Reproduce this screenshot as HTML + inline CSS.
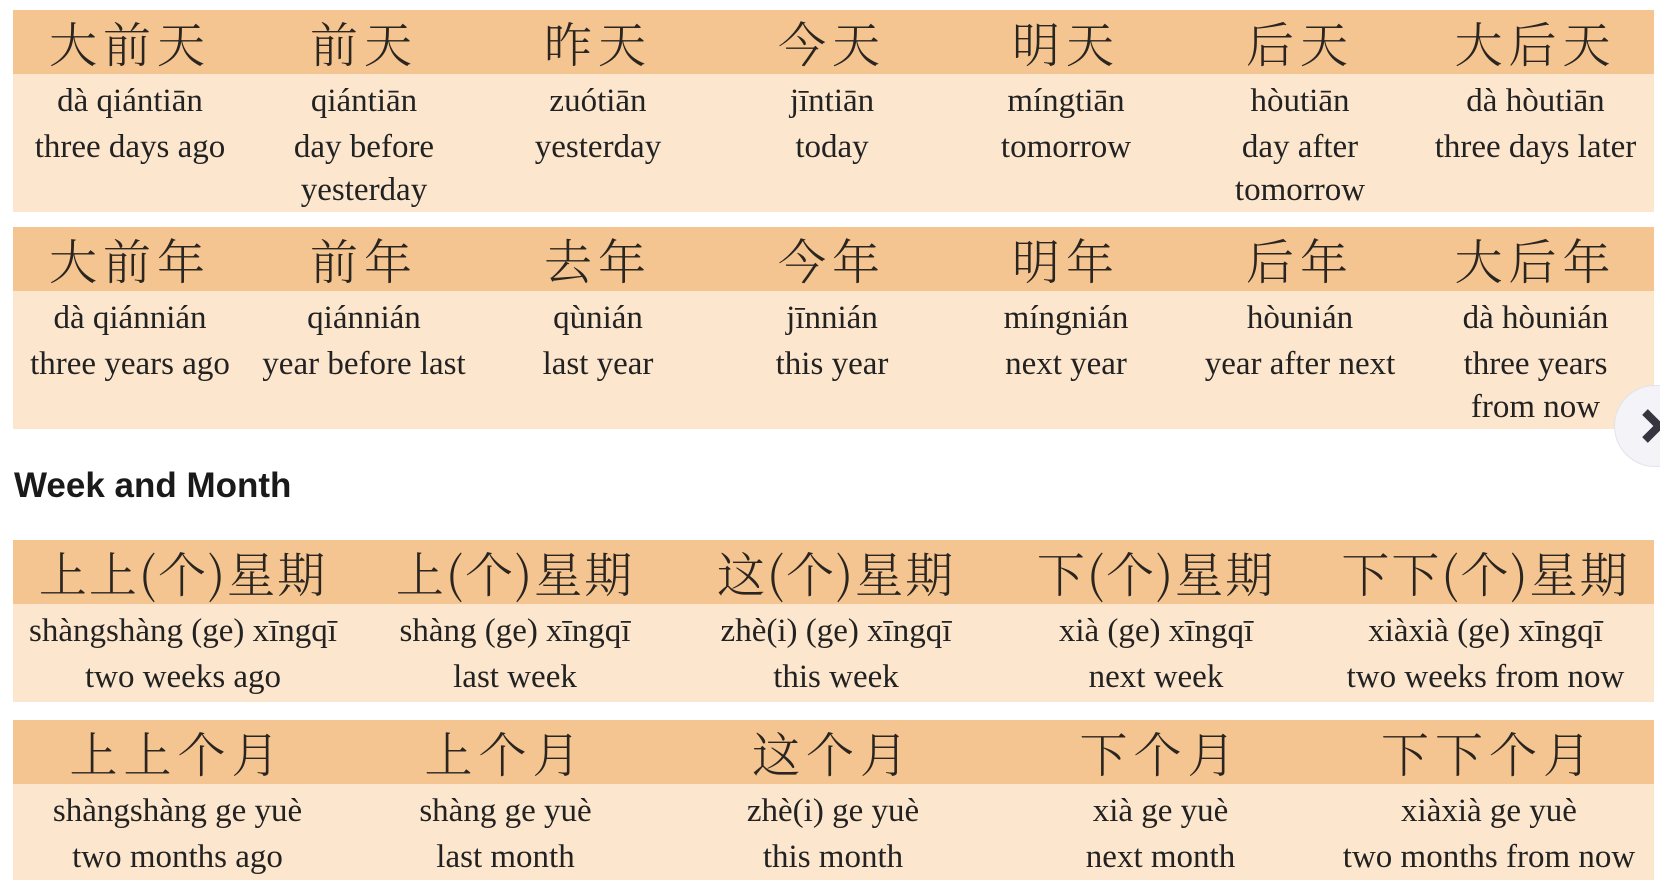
<!DOCTYPE html>
<html><head><meta charset="utf-8"><style>
body{margin:0;width:1660px;height:872px;background:#fff;position:relative;overflow:hidden;font-family:"Liberation Serif","Noto Serif CJK SC",serif;color:#222}
.t{position:absolute;left:13px;width:1641px;display:flex;background:#fce6cd}
.c{position:relative;text-align:center}
.h{background:#f4c590;font-family:"Noto Serif CJK SC",serif;font-weight:300;font-size:48px;letter-spacing:6px;line-height:64px;white-space:nowrap;color:#2a2520}
.s .h{letter-spacing:2px}
.b{font-size:33px;line-height:46px;padding-top:4px;white-space:nowrap}
.b span{display:block;line-height:40px}
h2{position:absolute;left:14px;top:466px;margin:0;font:bold 35px "Liberation Sans",sans-serif;color:#1a1a1a}
.nav{position:absolute;left:1614px;top:385px;width:80px;height:80px;border-radius:50%;background:#f4f3f8;border:1px solid #e2e2ea}
</style></head><body>
<div class="t" style="top:10px;height:202px">
<div class="c" style="width:234px"><div class="h">大前天</div><div class="b">dà qiántiān<br>three days ago</div></div>
<div class="c" style="width:234px"><div class="h">前天</div><div class="b">qiántiān<br>day before<span>yesterday</span></div></div>
<div class="c" style="width:234px"><div class="h">昨天</div><div class="b">zuótiān<br>yesterday</div></div>
<div class="c" style="width:234px"><div class="h">今天</div><div class="b">jīntiān<br>today</div></div>
<div class="c" style="width:234px"><div class="h">明天</div><div class="b">míngtiān<br>tomorrow</div></div>
<div class="c" style="width:234px"><div class="h">后天</div><div class="b">hòutiān<br>day after<span>tomorrow</span></div></div>
<div class="c" style="width:237px"><div class="h">大后天</div><div class="b">dà hòutiān<br>three days later</div></div>
</div>
<div class="t" style="top:227px;height:202px">
<div class="c" style="width:234px"><div class="h">大前年</div><div class="b">dà qiánnián<br>three years ago</div></div>
<div class="c" style="width:234px"><div class="h">前年</div><div class="b">qiánnián<br>year before last</div></div>
<div class="c" style="width:234px"><div class="h">去年</div><div class="b">qùnián<br>last year</div></div>
<div class="c" style="width:234px"><div class="h">今年</div><div class="b">jīnnián<br>this year</div></div>
<div class="c" style="width:234px"><div class="h">明年</div><div class="b">míngnián<br>next year</div></div>
<div class="c" style="width:234px"><div class="h">后年</div><div class="b">hòunián<br>year after next</div></div>
<div class="c" style="width:237px"><div class="h">大后年</div><div class="b">dà hòunián<br>three years<span>from now</span></div></div>
</div>
<h2>Week and Month</h2>
<div class="t s" style="top:540px;height:162px">
<div class="c" style="width:340px"><div class="h">上上(个)星期</div><div class="b">shàngshàng (ge) xīngqī<br>two weeks ago</div></div>
<div class="c" style="width:324px"><div class="h">上(个)星期</div><div class="b">shàng (ge) xīngqī<br>last week</div></div>
<div class="c" style="width:318px"><div class="h">这(个)星期</div><div class="b">zhè(i) (ge) xīngqī<br>this week</div></div>
<div class="c" style="width:322px"><div class="h">下(个)星期</div><div class="b">xià (ge) xīngqī<br>next week</div></div>
<div class="c" style="width:337px"><div class="h">下下(个)星期</div><div class="b">xiàxià (ge) xīngqī<br>two weeks from now</div></div>
</div>
<div class="t" style="top:720px;height:160px">
<div class="c" style="width:329px"><div class="h">上上个月</div><div class="b">shàngshàng ge yuè<br>two months ago</div></div>
<div class="c" style="width:327px"><div class="h">上个月</div><div class="b">shàng ge yuè<br>last month</div></div>
<div class="c" style="width:328px"><div class="h">这个月</div><div class="b">zhè(i) ge yuè<br>this month</div></div>
<div class="c" style="width:327px"><div class="h">下个月</div><div class="b">xià ge yuè<br>next month</div></div>
<div class="c" style="width:330px"><div class="h">下下个月</div><div class="b">xiàxià ge yuè<br>two months from now</div></div>
</div>
<div class="nav"><svg width="80" height="80" style="position:absolute;left:0;top:0"><path d="M30 26 L44 40 L30 54" fill="none" stroke="#35343f" stroke-width="8" stroke-linejoin="miter"/></svg></div>
</body></html>
